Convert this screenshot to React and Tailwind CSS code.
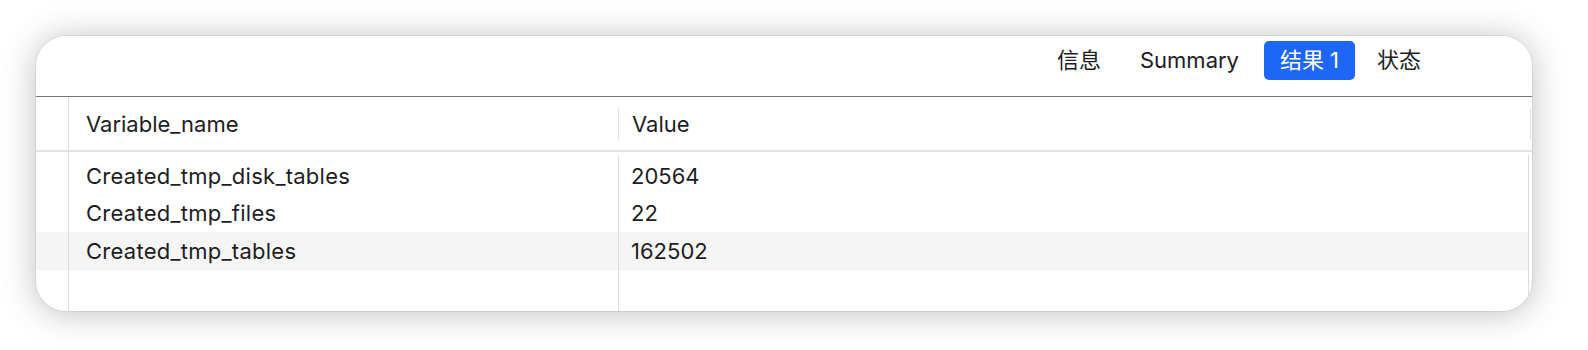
export default function App() {
  const rows = [
    ["Created_tmp_disk_tables", "20564"],
    ["Created_tmp_files", "22"],
    ["Created_tmp_tables", "162502"],
  ];
  const font = { fontFamily: 'Inter, "Noto Sans CJK SC", sans-serif' };
  return (
    <div className="w-[1588px] h-[350px] bg-white pt-[36px] pl-[36px]" style={font}>
      <div className="w-[1496px] h-[275px] rounded-[30px] bg-white overflow-hidden flex flex-col shadow-[0_2px_34px_rgba(0,0,0,0.26)] ring-1 ring-black/5 text-[#1d1d1f] text-[22px]">
        {/* toolbar */}
        <div className="h-[61px] shrink-0 border-b border-[#777] flex justify-end items-start pt-[5px] pr-[111px]">
          <div className="h-[39px] mr-[39px] flex items-center">信息</div>
          <div className="h-[39px] mr-[25px] flex items-center">Summary</div>
          <div className="h-[39px] w-[91px] flex items-center justify-center rounded-[5px] bg-[#1e66f5] text-white">结果 1</div>
          <div className="h-[39px] ml-[22px] flex items-center">状态</div>
        </div>
        {/* header */}
        <div className="h-[55px] shrink-0 flex border-b-2 border-[#e3e3e3]">
          <div className="w-[33px] shrink-0 border-r border-[#dcdcdc]"></div>
          <div className="w-[550px] shrink-0 flex items-center justify-between">
            <span className="pl-[17px] pt-[2px]">Variable_name</span>
            <div className="w-px h-[32px] bg-[#e0e0e0]"></div>
          </div>
          <div className="flex-1 flex items-center justify-between">
            <span className="pl-[13px] pt-[2px]">Value</span>
            <div className="w-px h-[32px] bg-[#e0e0e0] mr-[1px]"></div>
          </div>
        </div>
        {/* body */}
        <div className="flex-1 flex">
          <div className="w-[33px] shrink-0 border-r border-[#dcdcdc] pt-[5px] flex flex-col">
            {rows.map((r, i) => (
              <div key={i} className={`h-[37.5px] ${i === 2 ? "bg-[#f5f5f5]" : ""}`}></div>
            ))}
          </div>
          <div className="w-[550px] shrink-0 border-r border-[#dcdcdc] mt-[3px] pt-[2px] flex flex-col">
            {rows.map((r, i) => (
              <div key={i} className={`h-[37.5px] flex items-center pl-[17px] pt-[1px] tracking-[0.012em] ${i === 2 ? "bg-[#f5f5f5]" : ""}`}>
                {r[0]}
              </div>
            ))}
          </div>
          <div className="w-[910px] shrink-0 border-r border-[#dcdcdc] mt-[3px] pt-[2px] flex flex-col">
            {rows.map((r, i) => (
              <div key={i} className={`h-[37.5px] flex items-center pl-[12px] pt-[1px] ${i === 2 ? "bg-[#f5f5f5]" : ""}`}>
                {r[1]}
              </div>
            ))}
          </div>
          <div className="flex-1"></div>
        </div>
      </div>
    </div>
  );
}
